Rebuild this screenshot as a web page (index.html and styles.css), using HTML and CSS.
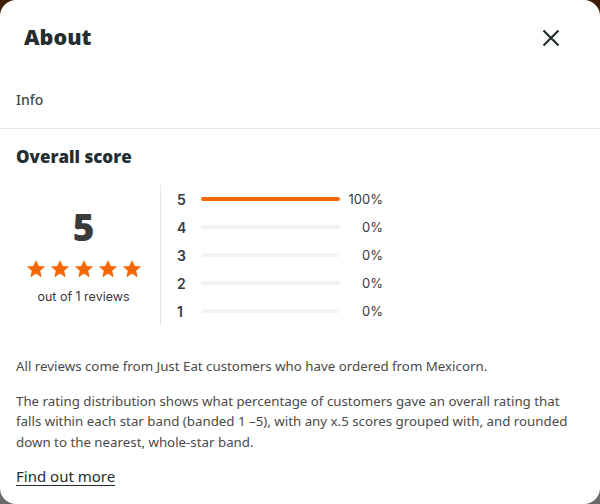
FILE: index.html
```html
<!DOCTYPE html>
<html lang="en">
<head>
<meta charset="utf-8">
<title>About</title>
<link rel="stylesheet" href="styles.css">
</head>
<body>
<div class="dialog">
  <header class="head">
    <h1 class="title">About</h1>
    <button class="close" aria-label="Close">
      <svg width="18" height="18" viewBox="0 0 18 18"><path d="M1.5 1.5L16.5 16.5M16.5 1.5L1.5 16.5" stroke="#242e30" stroke-width="2.2" stroke-linecap="butt"/></svg>
    </button>
  </header>
  <nav class="tabs"><span class="tab">Info</span></nav>
  <section class="content">
    <h2 class="sub">Overall score</h2>
    <div class="score">
      <div class="summary">
        <div class="big">5</div>
        <div class="stars">
          <svg class="star" viewBox="0 0 24 24"><path d="M12 1.2l3.2 7.1 7.8.7-5.9 5.2 1.8 7.6L12 17.8l-6.9 4 1.8-7.6L1 9l7.8-.7z"/></svg>
          <svg class="star" viewBox="0 0 24 24"><path d="M12 1.2l3.2 7.1 7.8.7-5.9 5.2 1.8 7.6L12 17.8l-6.9 4 1.8-7.6L1 9l7.8-.7z"/></svg>
          <svg class="star" viewBox="0 0 24 24"><path d="M12 1.2l3.2 7.1 7.8.7-5.9 5.2 1.8 7.6L12 17.8l-6.9 4 1.8-7.6L1 9l7.8-.7z"/></svg>
          <svg class="star" viewBox="0 0 24 24"><path d="M12 1.2l3.2 7.1 7.8.7-5.9 5.2 1.8 7.6L12 17.8l-6.9 4 1.8-7.6L1 9l7.8-.7z"/></svg>
          <svg class="star" viewBox="0 0 24 24"><path d="M12 1.2l3.2 7.1 7.8.7-5.9 5.2 1.8 7.6L12 17.8l-6.9 4 1.8-7.6L1 9l7.8-.7z"/></svg>
        </div>
        <div class="count">out of 1 reviews</div>
      </div>
      <div class="dist">
        <div class="row"><span class="lbl">5</span><span class="bar"><span class="fill" style="width:100%"></span></span><span class="pct">100%</span></div>
        <div class="row"><span class="lbl">4</span><span class="bar"><span class="fill" style="width:0%"></span></span><span class="pct">0%</span></div>
        <div class="row"><span class="lbl">3</span><span class="bar"><span class="fill" style="width:0%"></span></span><span class="pct">0%</span></div>
        <div class="row"><span class="lbl">2</span><span class="bar"><span class="fill" style="width:0%"></span></span><span class="pct">0%</span></div>
        <div class="row"><span class="lbl">1</span><span class="bar"><span class="fill" style="width:0%"></span></span><span class="pct">0%</span></div>
      </div>
    </div>
    <p class="note first">All reviews come from Just Eat customers who have ordered from Mexicorn.</p>
    <p class="note">The rating distribution shows what percentage of customers gave an overall rating that falls within each star band (banded 1 –5), with any x.5 scores grouped with, and rounded down to the nearest, whole-star band.</p>
    <a class="more" href="#">Find out more</a>
  </section>
</div>
</body>
</html>
```
FILE: styles.css
```css
html, body {
  margin: 0;
  height: 100%;
}
body {
  background: linear-gradient(#3d1f08 0 50%, #6a6a6a 50% 100%);
  font-family: "Noto Sans", "Open Sans", sans-serif;
  color: #242e30;
}
.dialog {
  background: #fff;
  width: 600px;
  height: 504px;
  border-radius: 16px;
  overflow: hidden;
  box-sizing: border-box;
}
.head {
  display: flex;
  justify-content: space-between;
  align-items: center;
  height: 72px;
  padding: 0 40px 0 24px;
}
.title {
  margin: 0;
  font-family: "Open Sans", sans-serif;
  font-weight: 800;
  font-size: 21.5px;
  color: #242e30;
}
.close {
  border: 0;
  background: none;
  padding: 0;
  width: 18px;
  height: 18px;
  display: flex;
  margin-top: 4px;
}
.tabs {
  height: 57px;
  display: flex;
  align-items: center;
  padding: 0 16px 2px;
  border-bottom: 1px solid #e6e6e6;
  box-sizing: border-box;
}
.tab {
  font-size: 14px;
  font-weight: 500;
  color: #3c4b4f;
}
.content {
  padding: 0 16px;
}
.sub {
  margin: 17px 0 17px;
  font-family: "Open Sans", sans-serif;
  font-weight: 800;
  font-size: 17px;
  color: #242e30;
  line-height: 22px;
}
.score {
  display: flex;
}
.summary {
  width: 145px;
  border-right: 1px solid #e6e6e6;
  display: flex;
  flex-direction: column;
  align-items: center;
  padding: 22px 9px 0 0;
  box-sizing: border-box;
}
.big {
  font-family: "Open Sans", sans-serif;
  font-weight: 800;
  font-size: 37px;
  line-height: 40px;
  color: #3a3a3a;
}
.stars {
  display: flex;
  gap: 4px;
  margin-top: 12px;
}
.star {
  width: 20px;
  height: 20px;
  fill: #f36805;
}
.count {
  margin-top: 10px;
  font-family: "Inter", sans-serif;
  font-size: 12.5px;
  color: #3a3a3a;
}
.dist {
  display: flex;
  flex-direction: column;
  padding: 0 0 0 16px;
}
.row {
  display: flex;
  align-items: center;
  height: 28px;
  flex: none;
}
.lbl {
  width: 24px;
  font-family: "Inter", sans-serif;
  font-weight: 600;
  font-size: 14px;
  color: #3a3a3a;
}
.bar {
  width: 139px;
  height: 4px;
  border-radius: 2px;
  background: #f5f3f1;
  display: flex;
}
.fill {
  background: #f36805;
  border-radius: 2px;
  height: 4px;
}
.pct {
  width: 43px;
  text-align: right;
  font-family: "Inter", sans-serif;
  font-size: 13px;
  color: #3a3a3a;
}
.note {
  margin: 0;
  font-size: 13.3px;
  line-height: 20.5px;
  color: #4a4a4a;
}
.note.first {
  margin-top: 31px;
}
.note + .note {
  margin-top: 14px;
}
.more {
  display: inline-block;
  margin-top: 14px;
  font-size: 15px;
  color: #242e30;
  text-decoration: underline;
  text-underline-offset: 3px;
}
```
